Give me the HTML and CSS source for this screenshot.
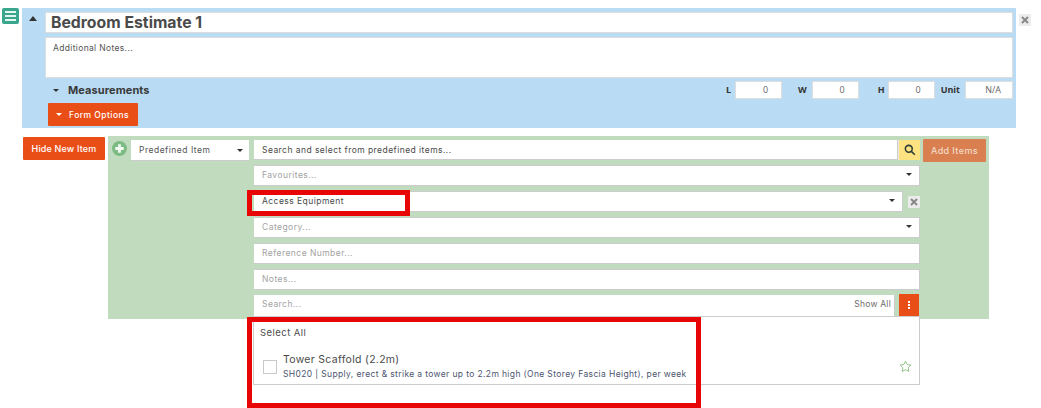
FILE: index.html
```html
<!DOCTYPE html>
<html lang="en">
<head>
<meta charset="utf-8">
<title>Bedroom Estimate 1</title>
<link rel="stylesheet" href="styles.css">
</head>
<body>
<div class="page">
  <section class="room-row">
    <button class="menu-btn" aria-label="Menu"><span></span><span></span><span></span></button>
    <div class="room-panel">
      <div class="caret-col"><i class="tri-up"></i></div>
      <div class="room-main">
        <div class="title-input">Bedroom Estimate 1</div>
        <div class="notes-input">Additional Notes...</div>
        <div class="measure-row">
          <i class="tri-down tiny dark"></i>
          <strong class="measure-label">Measurements</strong>
          <div class="dims">
            <b class="dim-l">L</b><span class="dim-box">0</span>
            <b class="dim-w">W</b><span class="dim-box">0</span>
            <b class="dim-h">H</b><span class="dim-box">0</span>
            <b class="dim-u">Unit</b><span class="dim-box unit">N/A</span>
          </div>
        </div>
        <button class="btn form-options"><i class="tri-down tiny white"></i>Form Options</button>
      </div>
    </div>
    <button class="x-btn room-x" aria-label="Remove"><svg viewBox="0 0 10 10"><path d="M2 2l6 6M8 2l-6 6"/></svg></button>
  </section>

  <section class="item-row">
    <button class="btn hide-new">Hide New Item</button>
    <div class="item-panel">
      <div class="plus"><svg viewBox="0 0 16 16"><circle cx="8" cy="8" r="8"/><path d="M8 3.5v9M3.5 8h9"/></svg></div>
      <div class="type-select">Predefined Item<i class="tri-down tiny dark"></i></div>
      <div class="fields">
        <div class="search-row">
          <div class="field grow strong">Search and select from predefined items...</div>
          <button class="search-btn" aria-label="Search"><svg viewBox="0 0 14 14"><circle cx="5.6" cy="5.6" r="4"/><path d="M8.6 8.6l4 4"/></svg></button>
        </div>
        <div class="field dd muted">Favourites...<i class="tri-down tiny dark"></i></div>
        <div class="access-row">
          <div class="field dd grow strong">Access Equipment<i class="tri-down tiny dark"></i></div>
          <button class="x-btn access-x" aria-label="Clear"><svg viewBox="0 0 10 10"><path d="M2 2l6 6M8 2l-6 6"/></svg></button>
        </div>
        <div class="field dd muted">Category...<i class="tri-down tiny dark"></i></div>
        <div class="field muted">Reference Number...</div>
        <div class="field muted">Notes...</div>
        <div class="list-search">
          <div class="field grow muted last">Search...<span class="show-all">Show All</span></div>
          <button class="more-btn" aria-label="More"><span></span><span></span><span></span></button>
        </div>
      </div>
      <button class="btn add-items">Add Items</button>
      <div class="results">
        <div class="select-all">Select All</div>
        <div class="result">
          <span class="check"></span>
          <div class="result-text">
            <div class="result-title">Tower Scaffold (2.2m)</div>
            <div class="result-sub">SH020 | Supply, erect &amp; strike a tower up to 2.2m high (One Storey Fascia Height), per week</div>
          </div>
          <svg class="star" viewBox="0 0 14 14"><path d="M7 1.2l1.8 3.7 4 .6-2.9 2.8.7 4L7 10.4l-3.600 1.900.7-4L1.200 5.500l4-.6z"/></svg>
        </div>
      </div>
    </div>
  </section>
  <div class="mark mark-access"></div>
  <div class="mark mark-results"></div>
</div>
</body>
</html>
```
FILE: styles.css
```css
* { box-sizing: border-box; }
html, body { margin: 0; height: 408px; overflow: hidden; background: #fff; }
body { font-family: "Inter", "Open Sans", "Liberation Sans", sans-serif; font-size: 9px; color: #444; }
button { font-family: inherit; border: 0; padding: 0; }
i { display: block; }
.page { position: relative; width: 1041px; height: 408px; padding-top: 8px; }

.room-row { display: flex; align-items: flex-start; padding-left: 2px; }
.menu-btn { width: 17px; height: 16px; background: #3aa68e; border-radius: 2px; display: flex; flex-direction: column; justify-content: center; gap: 2px; padding: 0 3px; margin-right: 3px; }
.menu-btn span { display: block; height: 2px; background: #e4f5ef; }
.room-panel { width: 994px; height: 120px; background: #b9dcf4; display: flex; padding-top: 4px; }
.caret-col { width: 23px; padding: 4px 0 0 7px; }
.tri-up { width: 0; height: 0; border-left: 4.5px solid transparent; border-right: 4.5px solid transparent; border-bottom: 5px solid #333; }
.tri-down { width: 0; height: 0; border-left: 4px solid transparent; border-right: 4px solid transparent; border-top: 4px solid #333; }
.tri-down.tiny { border-left-width: 3.5px; border-right-width: 3.5px; border-top-width: 3.5px; }
.tri-down.white { border-top-color: #fff; }
.room-main { width: 968px; }
.title-input { height: 21px; background: #fff; border: 1px solid #ddd; font-size: 15.8px; font-weight: 700; color: #4a4a4a; padding-left: 5px; line-height: 19px; }
.notes-input { height: 41px; margin-top: 4px; background: #fff; border: 1px solid #ddd; font-size: 8.5px; letter-spacing: .34px; color: #555; padding: 5px 7px; }
.measure-row { display: flex; align-items: center; height: 18px; margin-top: 3px; padding-left: 8px; }
.measure-label { font-size: 11px; letter-spacing: .08px; color: #3a3a3a; margin-left: 9px; }
.dims { margin-left: auto; display: flex; align-items: center; font-size: 9px; color: #333; }
.dims b { font-family: "Open Sans", sans-serif; font-weight: 700; position: relative; top: -1px; }
.dim-box { width: 47px; height: 18px; background: #fff; border: 1px solid #ddd; text-align: right; padding-right: 13px; line-height: 16px; font-size: 9px; color: #666; font-family: "Open Sans", sans-serif; }
.dim-box.unit { width: 48px; padding-right: 11px; }
.dim-l { margin-right: 4px; }
.dim-w { margin-left: 16px; margin-right: 5px; }
.dim-h { margin-left: 19px; margin-right: 3px; }
.dim-u { margin-left: 6px; margin-right: 5px; }
.btn { background: #ea4e17; color: #fff; border-radius: 1px; font-size: 8.5px; font-weight: 500; }
.form-options { display: flex; align-items: center; gap: 7px; width: 90px; height: 23px; margin: 4px 0 0 3px; padding-left: 8px; letter-spacing: .45px; }
.x-btn { background: #ececec; width: 12px; height: 12px; border-radius: 1px; display: flex; align-items: center; justify-content: center; }
.x-btn svg { width: 10px; height: 10px; fill: none; stroke: #888; stroke-width: 2; }
.room-x { margin: 6px 0 0 3px; }

.item-row { display: flex; align-items: flex-start; margin-top: 8px; padding-left: 23px; }
.hide-new { width: 82px; height: 23px; margin-top: 1px; margin-right: 3px; font-size: 9px; letter-spacing: .15px; }
.item-panel { position: relative; width: 881px; height: 183px; background: #c0dbbd; display: flex; align-items: flex-start; padding: 4px 0 0 4px; }
.plus { width: 15px; height: 15px; margin: 1px 4px 0 0; }
.plus svg { display: block; width: 15px; height: 15px; }
.plus circle { fill: #7dbb84; }
.plus path { stroke: #f2f8f2; stroke-width: 3; fill: none; }
.type-select { width: 118px; height: 21px; background: #fff; border-bottom: 1px solid #ccc; display: flex; align-items: center; justify-content: space-between; padding: 0 6px 0 8px; font-size: 8.5px; letter-spacing: .5px; color: #555; }
.fields { width: 666px; margin-left: 5px; display: flex; flex-direction: column; gap: 5px; }
.field { height: 21px; background: #fff; border: 1px solid #ccc; border-width: 1px 1px 1px 0; display: flex; align-items: center; justify-content: space-between; padding: 0 8px 2px; font-size: 8.5px; letter-spacing: .45px; }
.grow { flex: 1; }
.muted { color: #a2a2a2; }
.strong { color: #4a4a4a; }
.dd i { margin-right: -1px; }
.search-row { display: flex; }
.search-row .field { border-top: 0; height: 20px; padding-bottom: 0; }
.search-btn { width: 22px; height: 20px; background: #fce281; border-left: 1px solid #e7e7e7; display: flex; align-items: center; justify-content: center; }
.search-btn svg { width: 12px; height: 12px; fill: none; stroke: #2e3b35; stroke-width: 1.8; }
.access-row { display: flex; align-items: center; }
.access-x { margin-left: 5px; }
.list-search { display: flex; align-items: flex-start; height: 21px; gap: 4px; padding-right: 1px; }
.list-search .field.last { border-top: 0; border-bottom: 0; height: 21px; padding: 0 3px 3px 8px; }
.show-all { color: #6d6d6d; letter-spacing: .25px; }
.more-btn { width: 20px; height: 22px; margin-top: -1px; background: #ea4e17; display: flex; flex-direction: column; align-items: center; justify-content: center; gap: 1px; }
.more-btn span { width: 2px; height: 2px; background: #fff; }
.add-items { width: 63px; height: 23px; margin: -1px 0 0 3px; background: #da7f50; color: #f3dcc9; font-size: 9px; letter-spacing: .4px; }

.results { position: absolute; left: 145px; top: 180px; width: 667px; height: 69px; background: #fff; border: 1px solid #ccc; padding: 10px 7px 0 6px; }
.select-all { font-size: 9.5px; letter-spacing: .45px; color: #4d4d4d; }
.result { display: flex; align-items: center; margin-top: 15px; padding-left: 3px; }
.check { width: 14px; height: 14px; border: 1px solid #c9c9c9; margin-right: 6px; margin-top: 1px; }
.result-title { font-size: 10.5px; letter-spacing: .3px; color: #4a4a4a; }
.result-sub { font-size: 8.5px; letter-spacing: .37px; color: #4c5570; margin-top: 3px; white-space: nowrap; }
.star { width: 13px; height: 13px; margin-left: auto; fill: none; stroke: #8dbb83; stroke-width: 1; }

.mark { position: absolute; border: 5px solid #e80505; }
.mark-access { left: 247px; top: 190px; width: 163px; height: 26px; }
.mark-results { left: 247px; top: 317px; width: 454px; height: 91px; }
```
